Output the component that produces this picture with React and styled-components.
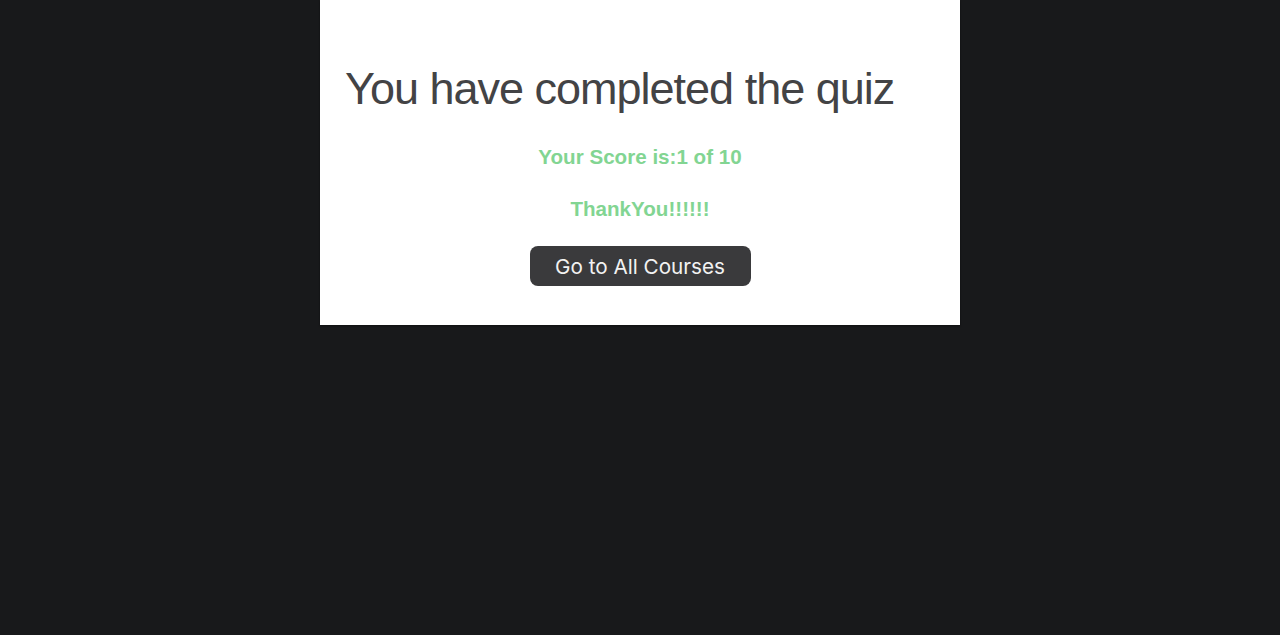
import React from 'react'
import styled, { createGlobalStyle } from 'styled-components'

const Global = createGlobalStyle`
    html, body {
        margin: 0;
        padding: 0;
        background: #18191b;
        height: 100%;
    }
    #root {
        min-height: 100vh;
    }
`

function App() {
    return (
        <>
            <Global />
            <Page>
                <Card>
                    <Title>You have completed the quiz</Title>
                    <Score>Your Score is:1 of 10</Score>
                    <Score>ThankYou!!!!!!</Score>
                    <Button>Go to All Courses</Button>
                </Card>
            </Page>
        </>
    )
}

export default App

const Page = styled.div`
    display: flex;
    justify-content: center;
    align-items: flex-start;
    min-height: 100vh;
`

const Card = styled.div`
    width: 640px;
    box-sizing: border-box;
    background: #ffffff;
    padding: 62px 25px 39px;
    display: flex;
    flex-direction: column;
    align-items: center;
    box-shadow: 0 1px 2px rgba(0, 0, 0, 0.4);
`

const Title = styled.h1`
    align-self: flex-start;
    margin: 0 0 29px;
    font-family: "Liberation Sans", Arial, sans-serif;
    font-weight: 400;
    font-size: 45px;
    letter-spacing: -1px;
    line-height: 54px;
    white-space: nowrap;
    color: #434345;
`

const Score = styled.p`
    margin: 0 0 28px;
    font-family: "Liberation Sans", Arial, sans-serif;
    font-weight: 700;
    font-size: 20.6px;
    line-height: 24px;
    color: #82d592;
`

const Button = styled.button`
    margin-top: -3px;
    width: 221px;
    height: 40px;
    border: none;
    border-radius: 8px;
    background: #3a3a3c;
    color: #f2f2f2;
    font-family: Inter, sans-serif;
    font-size: 20.7px;
    cursor: pointer;
`
